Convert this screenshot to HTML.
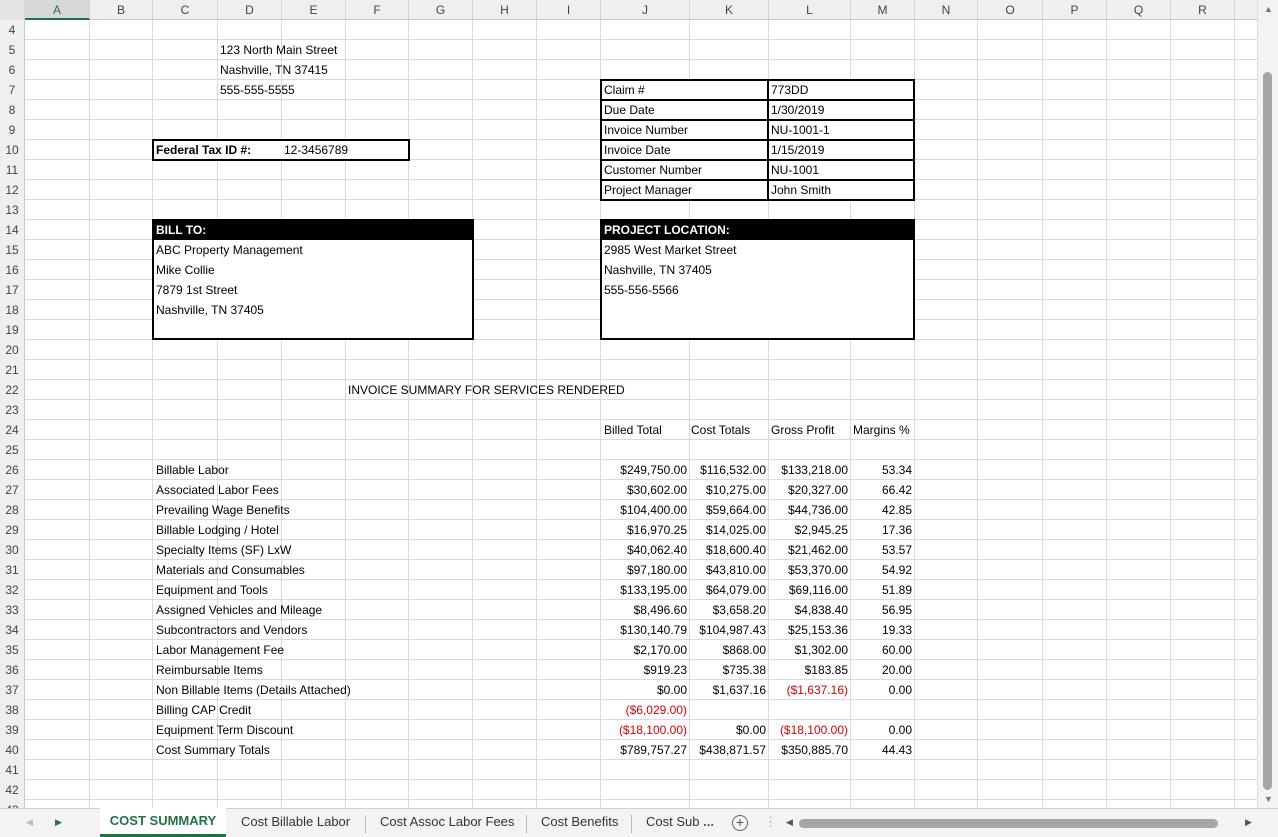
<!DOCTYPE html>
<html><head><meta charset="utf-8"><style>
*{margin:0;padding:0;box-sizing:border-box}
body{width:1278px;height:837px;overflow:hidden;background:#fff;font-family:"Liberation Sans",Arial,sans-serif;font-size:12px;color:#000;position:relative}
.a{position:absolute;white-space:nowrap;line-height:21px;height:20px;font-size:12px}
.r{text-align:right}
.red{color:#e00000}
#hdr{position:absolute;left:0;top:0;width:1257px;height:20px;background:#efefef;border-bottom:1px solid #c8c8c8}
.ch{position:absolute;top:0;height:20px;line-height:20px;text-align:center;color:#444;font-size:12px;border-right:1px solid #d4d4d4}
#rh{position:absolute;left:0;top:20px;width:25px;height:790px;background:#efefef;border-right:1px solid #c8c8c8}
.rn{position:absolute;left:0;width:24px;text-align:center;font-size:12px;color:#444;line-height:21px}
#grid{position:absolute;left:25px;top:20px;width:1232px;height:790px;background:repeating-linear-gradient(to bottom,transparent 0,transparent 19px,#dadada 19px,#dadada 20px)}
.vl{position:absolute;top:20px;height:790px;width:1px;background:#dadada}
.box{position:absolute;border:2px solid #000}
.bh{position:absolute;background:#000;color:#fff;font-weight:bold;line-height:21px;padding-left:3px;height:20px;font-size:12px}
#tabs{position:absolute;left:0;top:808px;width:1278px;height:29px;background:#f3f3f3;border-top:1px solid #d0d0d0;font-size:13px;color:#333}
.tab{position:absolute;top:0;height:28px;line-height:26px}
.sep{position:absolute;top:6px;width:1px;height:18px;background:#bbb}
#vs{position:absolute;left:1257px;top:0;width:21px;height:808px;background:#f3f3f3;border-left:1px solid #ddd}
</style></head><body>
<div id="grid"></div>
<div class="vl" style="left:89px"></div><div class="vl" style="left:152px"></div><div class="vl" style="left:217px"></div><div class="vl" style="left:281px"></div><div class="vl" style="left:345px"></div><div class="vl" style="left:408px"></div><div class="vl" style="left:472px"></div><div class="vl" style="left:536px"></div><div class="vl" style="left:600px"></div><div class="vl" style="left:689px"></div><div class="vl" style="left:768px"></div><div class="vl" style="left:850px"></div><div class="vl" style="left:914px"></div><div class="vl" style="left:977px"></div><div class="vl" style="left:1042px"></div><div class="vl" style="left:1106px"></div><div class="vl" style="left:1170px"></div><div class="vl" style="left:1234px"></div>

<div id="hdr">
<div class="ch" style="left:0;width:25px;background:#e4e4e4"></div>
<div class="ch" style="left:25px;width:65px;background:#d8d8d8;color:#217346;border-bottom:2px solid #217346">A</div>
<div class="ch" style="left:90px;width:63px">B</div><div class="ch" style="left:153px;width:65px">C</div><div class="ch" style="left:218px;width:64px">D</div><div class="ch" style="left:282px;width:64px">E</div><div class="ch" style="left:346px;width:63px">F</div><div class="ch" style="left:409px;width:64px">G</div><div class="ch" style="left:473px;width:64px">H</div><div class="ch" style="left:537px;width:64px">I</div><div class="ch" style="left:601px;width:89px">J</div><div class="ch" style="left:690px;width:79px">K</div><div class="ch" style="left:769px;width:82px">L</div><div class="ch" style="left:851px;width:64px">M</div><div class="ch" style="left:915px;width:63px">N</div><div class="ch" style="left:978px;width:65px">O</div><div class="ch" style="left:1043px;width:64px">P</div><div class="ch" style="left:1107px;width:64px">Q</div><div class="ch" style="left:1171px;width:64px">R</div>
</div>
<div id="rh">
<div class="rn" style="top:0">4</div><div class="rn" style="top:20px">5</div><div class="rn" style="top:40px">6</div><div class="rn" style="top:60px">7</div><div class="rn" style="top:80px">8</div><div class="rn" style="top:100px">9</div><div class="rn" style="top:120px">10</div><div class="rn" style="top:140px">11</div><div class="rn" style="top:160px">12</div><div class="rn" style="top:180px">13</div><div class="rn" style="top:200px">14</div><div class="rn" style="top:220px">15</div><div class="rn" style="top:240px">16</div><div class="rn" style="top:260px">17</div><div class="rn" style="top:280px">18</div><div class="rn" style="top:300px">19</div><div class="rn" style="top:320px">20</div><div class="rn" style="top:340px">21</div><div class="rn" style="top:360px">22</div><div class="rn" style="top:380px">23</div><div class="rn" style="top:400px">24</div><div class="rn" style="top:420px">25</div><div class="rn" style="top:440px">26</div><div class="rn" style="top:460px">27</div><div class="rn" style="top:480px">28</div><div class="rn" style="top:500px">29</div><div class="rn" style="top:520px">30</div><div class="rn" style="top:540px">31</div><div class="rn" style="top:560px">32</div><div class="rn" style="top:580px">33</div><div class="rn" style="top:600px">34</div><div class="rn" style="top:620px">35</div><div class="rn" style="top:640px">36</div><div class="rn" style="top:660px">37</div><div class="rn" style="top:680px">38</div><div class="rn" style="top:700px">39</div><div class="rn" style="top:720px">40</div><div class="rn" style="top:740px">41</div><div class="rn" style="top:760px">42</div><div class="rn" style="top:780px">43</div>
</div>

<div class="a" style="left:220px;top:40px">123 North Main Street</div>
<div class="a" style="left:220px;top:60px">Nashville, TN 37415</div>
<div class="a" style="left:220px;top:80px">555-555-5555</div>

<div class="box" style="left:152px;top:139px;width:258px;height:22px;background:#fff"></div>
<div class="a" style="left:156px;top:140px;font-weight:bold">Federal Tax ID #:</div>
<div class="a" style="left:284px;top:140px">12-3456789</div>

<div class="box" style="left:600px;top:79px;width:315px;height:122px;background:#fff"></div>
<div style="position:absolute;left:767px;top:80px;width:2px;height:120px;background:#000"></div>
<div style="position:absolute;left:601px;top:99px;width:313px;height:2px;background:#000"></div>
<div style="position:absolute;left:601px;top:119px;width:313px;height:2px;background:#000"></div>
<div style="position:absolute;left:601px;top:139px;width:313px;height:2px;background:#000"></div>
<div style="position:absolute;left:601px;top:159px;width:313px;height:2px;background:#000"></div>
<div style="position:absolute;left:601px;top:179px;width:313px;height:2px;background:#000"></div>
<div class="a" style="left:604px;top:80px">Claim #</div><div class="a" style="left:771px;top:80px">773DD</div>
<div class="a" style="left:604px;top:100px">Due Date</div><div class="a" style="left:771px;top:100px">1/30/2019</div>
<div class="a" style="left:604px;top:120px">Invoice Number</div><div class="a" style="left:771px;top:120px">NU-1001-1</div>
<div class="a" style="left:604px;top:140px">Invoice Date</div><div class="a" style="left:771px;top:140px">1/15/2019</div>
<div class="a" style="left:604px;top:160px">Customer Number</div><div class="a" style="left:771px;top:160px">NU-1001</div>
<div class="a" style="left:604px;top:180px">Project Manager</div><div class="a" style="left:771px;top:180px">John Smith</div>

<div class="box" style="left:152px;top:219px;width:322px;height:121px;background:#fff"></div>
<div class="bh" style="left:153px;top:220px;width:320px">BILL TO:</div>
<div class="a" style="left:156px;top:240px">ABC Property Management</div>
<div class="a" style="left:156px;top:260px">Mike Collie</div>
<div class="a" style="left:156px;top:280px">7879 1st Street</div>
<div class="a" style="left:156px;top:300px">Nashville, TN 37405</div>

<div class="box" style="left:600px;top:219px;width:315px;height:121px;background:#fff"></div>
<div class="bh" style="left:601px;top:220px;width:313px">PROJECT LOCATION:</div>
<div class="a" style="left:604px;top:240px">2985 West Market Street</div>
<div class="a" style="left:604px;top:260px">Nashville, TN 37405</div>
<div class="a" style="left:604px;top:280px">555-556-5566</div>

<div class="a" style="left:348px;top:380px">INVOICE SUMMARY FOR SERVICES RENDERED</div>
<div class="a" style="left:604px;top:420px">Billed Total</div>
<div class="a" style="left:691px;top:420px">Cost Totals</div>
<div class="a" style="left:771px;top:420px">Gross Profit</div>
<div class="a" style="left:853px;top:420px">Margins %</div>

<div class="a" style="left:156px;top:460px">Billable Labor</div>
<div class="a" style="left:156px;top:480px">Associated Labor Fees</div>
<div class="a" style="left:156px;top:500px">Prevailing Wage Benefits</div>
<div class="a" style="left:156px;top:520px">Billable Lodging / Hotel</div>
<div class="a" style="left:156px;top:540px">Specialty Items (SF) LxW</div>
<div class="a" style="left:156px;top:560px">Materials and Consumables</div>
<div class="a" style="left:156px;top:580px">Equipment and Tools</div>
<div class="a" style="left:156px;top:600px">Assigned Vehicles and Mileage</div>
<div class="a" style="left:156px;top:620px">Subcontractors and Vendors</div>
<div class="a" style="left:156px;top:640px">Labor Management Fee</div>
<div class="a" style="left:156px;top:660px">Reimbursable Items</div>
<div class="a" style="left:156px;top:680px">Non Billable Items (Details Attached)</div>
<div class="a" style="left:156px;top:700px">Billing CAP Credit</div>
<div class="a" style="left:156px;top:720px">Equipment Term Discount</div>
<div class="a" style="left:156px;top:740px">Cost Summary Totals</div>

<div class="a r" style="left:590px;width:97px;top:460px">$249,750.00</div><div class="a r" style="left:680px;width:86px;top:460px">$116,532.00</div><div class="a r" style="left:760px;width:88px;top:460px">$133,218.00</div><div class="a r" style="left:850px;width:62px;top:460px">53.34</div>
<div class="a r" style="left:590px;width:97px;top:480px">$30,602.00</div><div class="a r" style="left:680px;width:86px;top:480px">$10,275.00</div><div class="a r" style="left:760px;width:88px;top:480px">$20,327.00</div><div class="a r" style="left:850px;width:62px;top:480px">66.42</div>
<div class="a r" style="left:590px;width:97px;top:500px">$104,400.00</div><div class="a r" style="left:680px;width:86px;top:500px">$59,664.00</div><div class="a r" style="left:760px;width:88px;top:500px">$44,736.00</div><div class="a r" style="left:850px;width:62px;top:500px">42.85</div>
<div class="a r" style="left:590px;width:97px;top:520px">$16,970.25</div><div class="a r" style="left:680px;width:86px;top:520px">$14,025.00</div><div class="a r" style="left:760px;width:88px;top:520px">$2,945.25</div><div class="a r" style="left:850px;width:62px;top:520px">17.36</div>
<div class="a r" style="left:590px;width:97px;top:540px">$40,062.40</div><div class="a r" style="left:680px;width:86px;top:540px">$18,600.40</div><div class="a r" style="left:760px;width:88px;top:540px">$21,462.00</div><div class="a r" style="left:850px;width:62px;top:540px">53.57</div>
<div class="a r" style="left:590px;width:97px;top:560px">$97,180.00</div><div class="a r" style="left:680px;width:86px;top:560px">$43,810.00</div><div class="a r" style="left:760px;width:88px;top:560px">$53,370.00</div><div class="a r" style="left:850px;width:62px;top:560px">54.92</div>
<div class="a r" style="left:590px;width:97px;top:580px">$133,195.00</div><div class="a r" style="left:680px;width:86px;top:580px">$64,079.00</div><div class="a r" style="left:760px;width:88px;top:580px">$69,116.00</div><div class="a r" style="left:850px;width:62px;top:580px">51.89</div>
<div class="a r" style="left:590px;width:97px;top:600px">$8,496.60</div><div class="a r" style="left:680px;width:86px;top:600px">$3,658.20</div><div class="a r" style="left:760px;width:88px;top:600px">$4,838.40</div><div class="a r" style="left:850px;width:62px;top:600px">56.95</div>
<div class="a r" style="left:590px;width:97px;top:620px">$130,140.79</div><div class="a r" style="left:680px;width:86px;top:620px">$104,987.43</div><div class="a r" style="left:760px;width:88px;top:620px">$25,153.36</div><div class="a r" style="left:850px;width:62px;top:620px">19.33</div>
<div class="a r" style="left:590px;width:97px;top:640px">$2,170.00</div><div class="a r" style="left:680px;width:86px;top:640px">$868.00</div><div class="a r" style="left:760px;width:88px;top:640px">$1,302.00</div><div class="a r" style="left:850px;width:62px;top:640px">60.00</div>
<div class="a r" style="left:590px;width:97px;top:660px">$919.23</div><div class="a r" style="left:680px;width:86px;top:660px">$735.38</div><div class="a r" style="left:760px;width:88px;top:660px">$183.85</div><div class="a r" style="left:850px;width:62px;top:660px">20.00</div>
<div class="a r" style="left:590px;width:97px;top:680px">$0.00</div><div class="a r" style="left:680px;width:86px;top:680px">$1,637.16</div><div class="a r red" style="left:760px;width:88px;top:680px">($1,637.16)</div><div class="a r" style="left:850px;width:62px;top:680px">0.00</div>
<div class="a r red" style="left:590px;width:97px;top:700px">($6,029.00)</div>
<div class="a r red" style="left:590px;width:97px;top:720px">($18,100.00)</div><div class="a r" style="left:680px;width:86px;top:720px">$0.00</div><div class="a r red" style="left:760px;width:88px;top:720px">($18,100.00)</div><div class="a r" style="left:850px;width:62px;top:720px">0.00</div>
<div class="a r" style="left:590px;width:97px;top:740px">$789,757.27</div><div class="a r" style="left:680px;width:86px;top:740px">$438,871.57</div><div class="a r" style="left:760px;width:88px;top:740px">$350,885.70</div><div class="a r" style="left:850px;width:62px;top:740px">44.43</div>

<div id="vs">
<div style="position:absolute;left:6px;top:4px;font-size:9px;color:#777">▲</div>
<div style="position:absolute;left:5px;top:72px;width:9px;height:718px;background:#a6a6a6;border-radius:5px"></div>
<div style="position:absolute;left:6px;top:794px;font-size:9px;color:#777">▼</div>
</div>
<div id="tabs">
<div class="tab" style="left:26px;color:#bbb;font-size:9px">◀</div>
<div class="tab" style="left:55px;color:#217346;font-size:9px">▶</div>
<div class="tab" style="left:100px;width:126px;background:#fff;text-align:center;font-weight:bold;color:#217346;border-bottom:3px solid #217346;top:-1px;height:29px">COST SUMMARY</div>
<div class="tab" style="left:241px">Cost Billable Labor</div>
<div class="sep" style="left:365px"></div>
<div class="tab" style="left:380px">Cost Assoc Labor Fees</div>
<div class="sep" style="left:526px"></div>
<div class="tab" style="left:541px">Cost Benefits</div>
<div class="sep" style="left:631px"></div>
<div class="tab" style="left:646px">Cost Sub <b style="color:#217346">...</b></div>
<div style="position:absolute;left:732px;top:6px;width:16px;height:16px;border:1px solid #666;border-radius:50%;text-align:center;line-height:13px;font-size:14px;color:#555">+</div>
<div class="tab" style="left:764px;color:#aaa">⋮</div>
<div class="tab" style="left:786px;color:#555;font-size:9px">◀</div>
<div style="position:absolute;left:799px;top:10px;width:419px;height:9px;background:#a6a6a6;border-radius:5px"></div>
<div class="tab" style="left:1245px;color:#555;font-size:9px">▶</div>
</div>
</body></html>
